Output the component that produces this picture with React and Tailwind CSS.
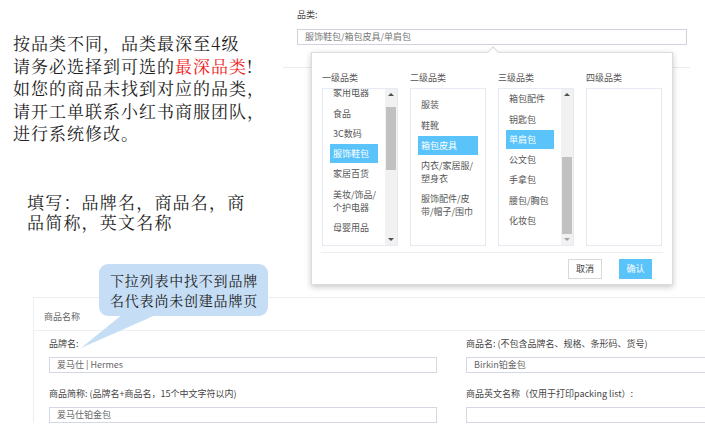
import React from 'react';

const sans = { fontFamily: '"Noto Sans CJK SC", "Noto Sans", sans-serif' };
const serif = { fontFamily: '"Noto Serif CJK SC", "Noto Sans CJK SC", serif' };

const level1 = [
  { t: '家用电器' },
  { t: '食品' },
  { t: '3C数码' },
  { t: '服饰鞋包', on: true },
  { t: '家居百货' },
  { t: ['美妆/饰品/', '个护电器'] },
  { t: '母婴用品' },
];
const level2 = [
  { t: '服装' },
  { t: '鞋靴' },
  { t: '箱包皮具', on: true },
  { t: ['内衣/家居服/', '塑身衣'] },
  { t: ['服饰配件/皮', '带/帽子/围巾'] },
];
const level3 = [
  { t: '箱包配件' },
  { t: '钥匙包' },
  { t: '单肩包', on: true },
  { t: '公文包' },
  { t: '手拿包' },
  { t: '腰包/胸包' },
  { t: '化妆包' },
];

const Item = ({ item }) => (
  <div
    className={`mx-[7px] my-[1.25px] px-[3px] py-[3px] leading-[13px] whitespace-nowrap ${
      item.on ? 'bg-[#5ac4fa] text-white' : 'text-[#555]'
    }`}
  >
    {Array.isArray(item.t) ? (
      <>
        {item.t[0]}
        <br />
        {item.t[1]}
      </>
    ) : (
      item.t
    )}
  </div>
);

const Scrollbar = ({ top, height, downLight }) => (
  <div className="relative w-[12px] h-full bg-[#f1f1f1] shrink-0">
    <div className="absolute left-[3px] top-[4px] w-0 h-0 border-l-[3px] border-r-[3px] border-b-[3px] border-l-transparent border-r-transparent border-b-[#505050]" />
    <div className="absolute left-[1px] w-[10px] bg-[#c1c1c1]" style={{ top, height }} />
    <div
      className={`absolute left-[3px] bottom-[4px] w-0 h-0 border-l-[3px] border-r-[3px] border-t-[3px] border-l-transparent border-r-transparent ${
        downLight ? 'border-t-[#a3a3a3]' : 'border-t-[#505050]'
      }`}
    />
  </div>
);

const ListBox = ({ items, offset, scroll }) => (
  <div className="h-[158px] border border-[#e6eaf2] flex overflow-hidden">
    <div className="flex-1 overflow-hidden" style={{ paddingTop: offset > 0 ? offset : 0 }}>
      <div style={{ marginTop: offset < 0 ? offset : 0 }}>
        {items.map((it, i) => (
          <Item key={i} item={it} />
        ))}
      </div>
    </div>
    {scroll && <Scrollbar {...scroll} />}
  </div>
);

const Field = ({ label, value }) => (
  <div>
    <div className="text-[9px] leading-[12px] text-[#444]">{label}</div>
    <div className="mt-[7px] h-[16px] border border-[#d3d8e2] flex items-center pl-[7px] text-[9px] text-[#666]">
      {value}
    </div>
  </div>
);

export default function App() {
  return (
    <div className="relative w-[705px] h-[428px] overflow-hidden bg-white" style={sans}>
      <div className="flex h-[297px]">
        {/* notes */}
        <div className="w-[297px] shrink-0" style={serif}>
          <div className="pt-[32px] pl-[13px] text-[17px] leading-[22.5px] tracking-[1px] text-[#222]">
            按品类不同，品类最深至4级
            <br />
            请务必选择到可选的<span className="text-[#f01c1c]">最深品类</span>!
            <br />
            如您的商品未找到对应的品类，
            <br />
            请开工单联系小红书商服团队，
            <br />
            进行系统修改。
          </div>
          <div className="mt-[47px] pl-[27px] text-[17px] leading-[20px] tracking-[1.2px] text-[#222]">
            填写：品牌名，商品名，商
            <br />
            品简称，英文名称
          </div>
        </div>

        {/* category picker */}
        <div className="relative flex-1 pt-[9px]">
          <div className="text-[9px] leading-[12px] text-[#444]">品类:</div>
          <div className="mt-[8px] w-[390px] h-[16px] border border-[#cdd2dc] flex items-center pl-[7px] text-[9px] text-[#777]">
            服饰鞋包/箱包皮具/单肩包
          </div>
          <div className="mt-[22px] -ml-[14px] w-[407px] h-px bg-[#e8ebf0]" />

          <div className="absolute left-[14px] top-[52px] w-[362px] h-[233px] bg-white border border-[#dcdcdc] shadow-[0_2px_6px_rgba(0,0,0,0.22)]">
            <div className="absolute -top-[5px] left-[177px] w-[8px] h-[8px] rotate-45 bg-white border-l border-t border-[#dcdcdc]" />
            <div className="pt-[19px] pl-[10px]">
              <div className="grid grid-cols-[76px_76px_76px_76px] gap-x-[12px] text-[9px] leading-[12px] text-[#555]">
                <div>一级品类</div>
                <div>二级品类</div>
                <div>三级品类</div>
                <div>四级品类</div>
              </div>
              <div className="mt-[4px] grid grid-cols-[76px_76px_76px_76px] gap-x-[12px] text-[9px]">
                <ListBox items={level1} offset={-7} scroll={{ top: 18, height: 63 }} />
                <ListBox items={level2} offset={5} />
                <ListBox items={level3} offset={-1} scroll={{ top: 68, height: 77, downLight: true }} />
                <ListBox items={[]} offset={0} />
              </div>
            </div>
            <div className="mt-[6px] mx-[9px] h-px bg-[#eceef2]" />
            <div className="mt-[6px] pr-[20px] flex justify-end gap-[17px] text-[9px]">
              <div className="w-[34px] h-[20px] border border-[#d8d8d8] flex items-center justify-center text-[#444]">
                取消
              </div>
              <div className="w-[33px] h-[20px] bg-[#5ac4fa] flex items-center justify-center text-white">
                确认
              </div>
            </div>
          </div>
        </div>
      </div>

      {/* form card */}
      <div className="ml-[33px] w-[700px] border-l border-t border-[#eceef1]">
        <div className="h-[33px] pt-[13px] pl-[10px] text-[9px] leading-[12px] text-[#666] border-b border-[#eef0f3]">
          商品名称
        </div>
        <div className="pl-[15px] pt-[7px] grid grid-cols-[388px_1fr] gap-x-[29px] gap-y-[15px]">
          <Field label="品牌名:" value="爱马仕 | Hermes" />
          <Field label="商品名: (不包含品牌名、规格、条形码、货号)" value="Birkin铂金包" />
          <Field label="商品简称: (品牌名+商品名，15个中文字符以内)" value="爱马仕铂金包" />
          <Field label="商品英文名称（仅用于打印packing list）:" value="" />
        </div>
      </div>

      {/* speech bubble */}
      <svg className="absolute left-[78px] top-[310px]" width="95" height="42" viewBox="0 0 95 42">
        <polygon points="50,0 89,0 3,38" fill="#c5ddf5" />
      </svg>
      <div
        className="absolute left-[99px] top-[264px] w-[169px] h-[52px] rounded-[9px] bg-[#c5ddf5] pt-[6px] pl-[11px] text-[14px] leading-[20px] tracking-[0.8px] text-[#222]"
        style={serif}
      >
        下拉列表中找不到品牌
        <br />
        名代表尚未创建品牌页
      </div>
    </div>
  );
}
